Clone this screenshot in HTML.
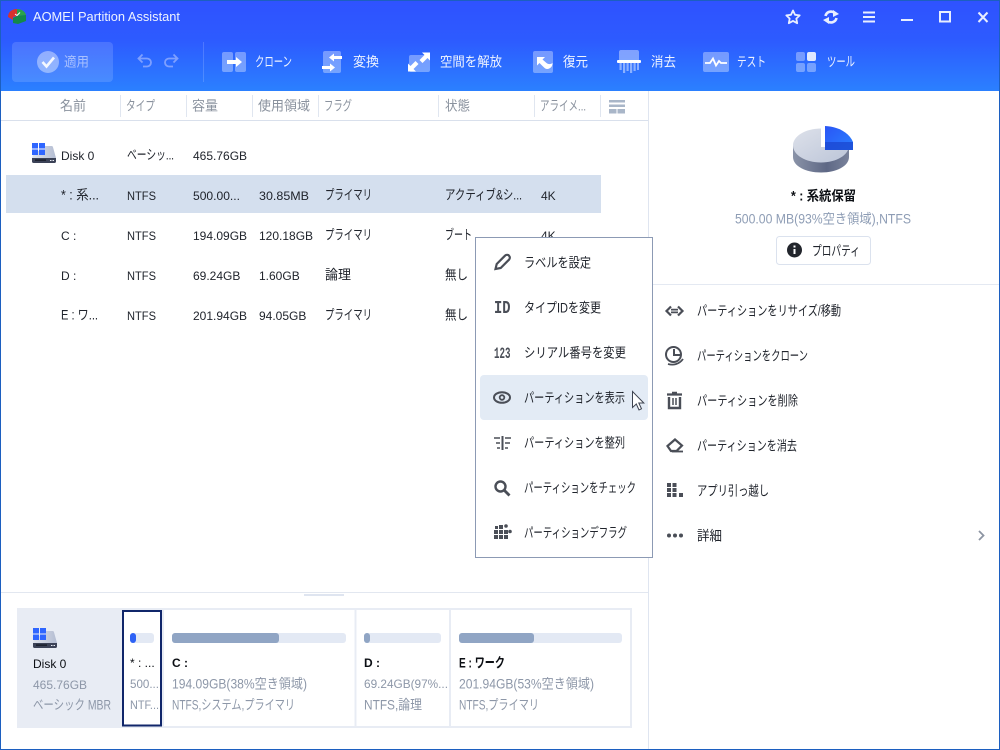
<!DOCTYPE html>
<html lang="ja">
<head>
<meta charset="utf-8">
<title>AOMEI Partition Assistant</title>
<style>
html,body{margin:0;padding:0;width:1000px;height:750px;overflow:hidden;background:#fff}
svg{display:block}
text{font-family:"Liberation Sans","Noto Sans CJK JP",sans-serif;font-size:12px;fill:#20242c;white-space:pre}
text[textLength]{font-size:13.5px;transform:translateY(.6px)}
.h{fill:#8a929e}
.w{fill:#eef3ff}
.g{fill:#8d97a8}
.s{fill:#8e9db5}
.b{font-weight:700;fill:#0c0f14}
.i{fill:#4a4e57}
.ic{fill:#fff;opacity:.35}
text.m{font-family:"Liberation Mono",monospace;font-weight:700;fill:#4a4e57}
</style>
</head>
<body>
<svg width="1000" height="750" viewBox="0 0 1000 750" xmlns="http://www.w3.org/2000/svg">
<defs>
<linearGradient id="hd" x1="0" y1="0" x2="0" y2="1"><stop offset="0" stop-color="#2f52ff"/><stop offset=".45" stop-color="#2d5bff"/><stop offset="1" stop-color="#2b80ff"/></linearGradient>
<linearGradient id="pt" x1="0" y1="0" x2="1" y2="1"><stop offset="0" stop-color="#dde1ea"/><stop offset="1" stop-color="#bcc5d8"/></linearGradient>
<linearGradient id="ps" x1="0" y1="0" x2="1" y2="0"><stop offset="0" stop-color="#8a93a8"/><stop offset=".6" stop-color="#5e6885"/><stop offset="1" stop-color="#79829b"/></linearGradient>
<linearGradient id="pb" x1="0" y1="0" x2="1" y2="1"><stop offset="0" stop-color="#2a55f5"/><stop offset="1" stop-color="#2a80ff"/></linearGradient>
<linearGradient id="dk" x1="0" y1="0" x2="1" y2="0"><stop offset="0" stop-color="#dfe3ec"/><stop offset="1" stop-color="#b4bdd2"/></linearGradient>
<symbol id="disk" viewBox="0 0 24 20" overflow="visible">
<path d="M2 8h11V3h6.500c.8 0 1.300.4 1.500 1.200L24 15H0z" fill="url(#dk)"/>
<path d="M0 15h24v3.500c0 .9-.7 1.500-1.500 1.500h-21C.7 20 0 19.400 0 18.500z" fill="#3b4257"/>
<rect x="3" y="16.500" width="11" height="1.200" fill="#11151f"/>
<rect x="18" y="17" width="1.500" height="1" fill="#e8ecf4"/><rect x="20.500" y="17" width="1.500" height="1" fill="#e8ecf4"/>
<rect x="0" y="0" width="6" height="5.500" fill="#2f66ff"/><rect x="7" y="0" width="6" height="5.500" fill="#2f66ff"/>
<rect x="0" y="6.500" width="6" height="5.500" fill="#2f66ff"/><rect x="7" y="6.500" width="6" height="5.500" fill="#2f66ff"/>
</symbol>
</defs>

<rect width="1000" height="750" fill="#fff"/>
<!-- header -->
<rect x="0" y="0" width="1000" height="91" fill="url(#hd)"/>
<!-- app logo -->
<path d="M8 17c0-5 4-8 9-8v7l-4 1v3z" fill="#d8322e"/>
<path d="M17 9c4 0 8 2 9 6l-9 1z" fill="#2aa34a"/>
<path d="M13 18l4-2 9-1v6l-8 3-5-1z" fill="#14894a"/>
<path d="M15 14l2 1.500 3-3" fill="none" stroke="#fff" stroke-width="1"/>
<text x="33" y="21" class="w" textLength="147" lengthAdjust="spacingAndGlyphs" style="font-size:13px;transform:none">AOMEI Partition Assistant</text>

<!-- window controls -->
<path d="M793 10.500l2 4.300 4.700.6-3.400 3.200.9 4.600-4.200-2.300-4.200 2.300.9-4.600-3.400-3.200 4.700-.6z" fill="none" stroke="#e8eeff" stroke-width="1.800" stroke-linejoin="round"/>
<path d="M825.500 16a5.600 5.600 0 0 1 9-3.200M836.500 18a5.600 5.600 0 0 1-9 3.200" fill="none" stroke="#e8eeff" stroke-width="2.600"/>
<path d="M833 10l6 4-6 3zM829 24l-6-4 6-3z" fill="#e8eeff"/>
<path d="M863 12.500h12M863 17h12M863 21.500h12" stroke="#e8eeff" stroke-width="2"/>
<rect x="901" y="19" width="12" height="2" fill="#e8eeff"/>
<rect x="940" y="12" width="10" height="9.500" fill="none" stroke="#e8eeff" stroke-width="2"/>
<path d="M978.500 12.500l9 9.500M987.500 12.500l-9 9.500" stroke="#e8eeff" stroke-width="2"/>

<!-- toolbar -->
<rect x="12" y="42" width="101" height="40" rx="4" fill="#fff" opacity=".14"/>
<circle cx="48" cy="62" r="11" fill="#fff" opacity=".4"/>
<path d="M42.500 62l4 4.500 7.500-9" fill="none" stroke="#fff" stroke-opacity=".9" stroke-width="2.600"/>
<text x="64" y="66" style="fill:#a8c0ff" textLength="25" lengthAdjust="spacingAndGlyphs">適用</text>
<path d="M139 58.500h8a4 4 0 0 1 0 8h-4M142.500 54.500l-4 4 4 4" fill="none" stroke="#7fa0ff" stroke-width="1.800"/>
<path d="M177 58.500h-8a4 4 0 0 0 0 8h4M173.500 54.500l4 4-4 4" fill="none" stroke="#7fa0ff" stroke-width="1.800"/>
<rect x="203" y="42" width="1" height="40" fill="#fff" opacity=".16"/>

<!-- clone -->
<rect x="222" y="52" width="11" height="20" rx="2" class="ic"/><rect x="235" y="52" width="11" height="20" rx="2" class="ic"/>
<path d="M227 60h9v-3l6 5-6 5v-3h-9z" fill="#fff"/>
<text x="255" y="66" class="w" textLength="37" lengthAdjust="spacingAndGlyphs">クローン</text>
<!-- convert -->
<rect x="323" y="51" width="18" height="22" rx="2" class="ic"/>
<path d="M342 56h-8v-2.500l-5 4 5 4V59h8z" fill="#fff"/>
<path d="M322 66h8v-2.500l5 4-5 4V69h-8z" fill="#fff"/>
<text x="353" y="66" class="w" textLength="26" lengthAdjust="spacingAndGlyphs">変換</text>
<!-- free space -->
<rect x="409" y="55" width="21" height="17" rx="2" class="ic"/>
<path d="M430 52.500v8l-2.500-2.500-5 5-3-3 5-5-2.500-2.500zM408 71.500v-8l2.500 2.500 5-5 3 3-5 5 2.500 2.500z" fill="#fff"/>
<text x="440" y="66" class="w" textLength="62" lengthAdjust="spacingAndGlyphs">空間を解放</text>
<!-- recover -->
<rect x="533" y="51" width="20" height="22" rx="2" class="ic"/>
<path d="M537 57h8l-2.500 2.500 4 3.500c2 1.500 4 1.500 6 0 0 3-1.500 5.500-5 6-2 0-3-1-4.500-2.500l-3.500-3.500-2.500 2.500z" fill="#fff"/>
<text x="563" y="66" class="w" textLength="25" lengthAdjust="spacingAndGlyphs">復元</text>
<!-- wipe -->
<path d="M619 52c0-1 .6-2 2-2h16c1.400 0 2 1 2 2v8h-20z" fill="#fff" opacity=".4"/>
<rect x="617" y="60" width="24" height="3" rx="1" fill="#fff"/>
<path d="M619.500 63h2.200v7h-2.200zM623 63h2.200v10H623zM626.500 63h2.200v8h-2.200zM630 63h2.200v10H630zM633.500 63h2.200v8h-2.200zM637 63h2v7h-2z" fill="#fff" opacity=".45"/>
<text x="651" y="66" class="w" textLength="25" lengthAdjust="spacingAndGlyphs">消去</text>
<!-- test -->
<rect x="703" y="52" width="26" height="20" rx="2" class="ic"/>
<path d="M705 63h5l3-4.500 3 7 3-4.500 2 2h6" fill="none" stroke="#fff" stroke-width="1.800"/>
<text x="737" y="66" class="w" textLength="29" lengthAdjust="spacingAndGlyphs">テスト</text>
<!-- tools -->
<rect x="796" y="52" width="9" height="9" rx="2" class="ic"/><rect x="807" y="52" width="9" height="9" rx="2" fill="#dfe8ff"/>
<rect x="796" y="63" width="9" height="9" rx="2" class="ic"/><rect x="807" y="63" width="9" height="9" rx="2" class="ic"/>
<text x="827" y="66" class="w" textLength="28" lengthAdjust="spacingAndGlyphs">ツール</text>

<!-- table header -->
<rect x="0" y="120" width="648" height="1" fill="#d9e0ec"/>
<g fill="#e0e6f0"><rect x="120" y="95" width="1" height="22"/><rect x="186" y="95" width="1" height="22"/><rect x="252" y="95" width="1" height="22"/><rect x="318" y="95" width="1" height="22"/><rect x="438" y="95" width="1" height="22"/><rect x="534" y="95" width="1" height="22"/><rect x="600" y="95" width="1" height="22"/></g>
<rect x="648" y="91" width="1" height="659" fill="#dfe5f0"/>
<text x="60" y="110" class="h" textLength="26" lengthAdjust="spacingAndGlyphs">名前</text>
<text x="126" y="110" class="h" textLength="29" lengthAdjust="spacingAndGlyphs">タイプ</text>
<text x="192" y="110" class="h" textLength="26" lengthAdjust="spacingAndGlyphs">容量</text>
<text x="258" y="110" class="h" textLength="52" lengthAdjust="spacingAndGlyphs">使用領域</text>
<text x="324" y="110" class="h" textLength="28" lengthAdjust="spacingAndGlyphs">フラグ</text>
<text x="445" y="110" class="h" textLength="25" lengthAdjust="spacingAndGlyphs">状態</text>
<text x="540" y="110" class="h" textLength="46" lengthAdjust="spacingAndGlyphs">アライメ...</text>
<path d="M609 100h16v2.500h-16zM609 104.500h16v2.500h-16z" fill="#a9b6c8"/><rect x="609" y="109" width="7.500" height="4.500" fill="#a9b6c8"/><rect x="617.500" y="109" width="7.500" height="4.500" fill="#a9b6c8"/>

<!-- rows -->
<rect x="6" y="175" width="595" height="38" fill="#d4dfee"/>
<use href="#disk" x="32" y="143" width="24" height="20"/>
<text x="61" y="160">Disk 0</text>
<text x="127" y="159" textLength="47" lengthAdjust="spacingAndGlyphs">ベーシッ...</text>
<text x="193" y="160">465.76GB</text>

<text x="61" y="199" textLength="38" lengthAdjust="spacingAndGlyphs">* : 系...</text>
<text x="127" y="200" textLength="29" lengthAdjust="spacingAndGlyphs" style="font-size:12px;transform:none">NTFS</text>
<text x="193" y="200" textLength="47" lengthAdjust="spacingAndGlyphs" style="font-size:12px;transform:none">500.00...</text>
<text x="259" y="200" textLength="50" lengthAdjust="spacingAndGlyphs" style="font-size:12px;transform:none">30.85MB</text>
<text x="325" y="199" textLength="47" lengthAdjust="spacingAndGlyphs">プライマリ</text>
<text x="445" y="199" textLength="77" lengthAdjust="spacingAndGlyphs">アクティブ&amp;シ...</text>
<text x="541" y="200">4K</text>

<text x="61" y="240">C :</text>
<text x="127" y="240" textLength="29" lengthAdjust="spacingAndGlyphs" style="font-size:12px;transform:none">NTFS</text>
<text x="193" y="240">194.09GB</text>
<text x="259" y="240">120.18GB</text>
<text x="325" y="239" textLength="47" lengthAdjust="spacingAndGlyphs">プライマリ</text>
<text x="445" y="239" textLength="27" lengthAdjust="spacingAndGlyphs">ブート</text>
<text x="541" y="240">4K</text>

<text x="61" y="280">D :</text>
<text x="127" y="280" textLength="29" lengthAdjust="spacingAndGlyphs" style="font-size:12px;transform:none">NTFS</text>
<text x="193" y="280">69.24GB</text>
<text x="259" y="280">1.60GB</text>
<text x="325" y="279" textLength="26" lengthAdjust="spacingAndGlyphs">論理</text>
<text x="445" y="279" textLength="23" lengthAdjust="spacingAndGlyphs">無し</text>

<text x="61" y="319" textLength="37" lengthAdjust="spacingAndGlyphs">E : ワ...</text>
<text x="127" y="320" textLength="29" lengthAdjust="spacingAndGlyphs" style="font-size:12px;transform:none">NTFS</text>
<text x="193" y="320">201.94GB</text>
<text x="259" y="320">94.05GB</text>
<text x="325" y="319" textLength="47" lengthAdjust="spacingAndGlyphs">プライマリ</text>
<text x="445" y="319" textLength="23" lengthAdjust="spacingAndGlyphs">無し</text>

<!-- right panel -->
<path d="M793 146v11c0 9 12.500 15.500 28 15.500s28-6.500 28-15.500v-11z" fill="url(#ps)"/>
<path d="M821 129c-15.500 0-28 7.600-28 17s12.500 17 28 17 28-7.600 28-17c0-.3 0-.6 0-1h-28z" fill="url(#pt)" transform="translate(0 -.5)"/>
<rect x="821" y="126" width="4" height="21" fill="#fff"/>
<path d="M825 126c13 .5 24 6.500 28 16v8h-28z" fill="url(#pb)"/>
<path d="M825 142h28v8h-28z" fill="#1b46cf" opacity=".75"/>
<text x="791" y="200" class="b" textLength="65" lengthAdjust="spacingAndGlyphs">* : 系統保留</text>
<text x="735" y="223" class="s" textLength="176" lengthAdjust="spacingAndGlyphs">500.00 MB(93%空き領域),NTFS</text>
<rect x="776.500" y="236.500" width="94" height="28" rx="3" fill="#fff" stroke="#dbe2ee"/>
<circle cx="794.500" cy="250" r="7.500" fill="#22252c"/>
<rect x="793.500" y="249" width="2" height="5" fill="#fff"/><rect x="793.500" y="245.500" width="2" height="2" fill="#fff"/>
<text x="812" y="255" textLength="48" lengthAdjust="spacingAndGlyphs">プロパティ</text>
<rect x="649" y="284" width="351" height="1" fill="#e4e9f2"/>

<!-- right actions -->
<path d="M671 309.600h7M671 312.400h7" stroke="#4a4e57" stroke-width="1.800" fill="none"/>
<path d="M671 306.500l-4.500 4.500 4.500 4.500M678 306.500l4.500 4.500-4.500 4.500" fill="none" stroke="#4a4e57" stroke-width="2.200"/>
<text x="697" y="315" textLength="144" lengthAdjust="spacingAndGlyphs">パーティションをリサイズ/移動</text>
<circle cx="673.500" cy="354.500" r="7.500" fill="none" stroke="#4a4e57" stroke-width="2"/>
<path d="M674 349v6h6" fill="none" stroke="#4a4e57" stroke-width="2"/>
<path d="M668 364c5 1.500 11 .5 15-5" fill="none" stroke="#4a4e57" stroke-width="1.800"/>
<text x="697" y="360" textLength="111" lengthAdjust="spacingAndGlyphs">パーティションをクローン</text>
<path d="M667 394.500h15M672 392.800h5" stroke="#4a4e57" stroke-width="2.200" fill="none"/>
<path d="M669 397v11h11v-11" fill="none" stroke="#4a4e57" stroke-width="2.400"/>
<path d="M673 398v7M676 398v7" stroke="#4a4e57" stroke-width="1.500"/>
<text x="697" y="405" textLength="101" lengthAdjust="spacingAndGlyphs">パーティションを削除</text>
<path d="M667.500 446l7.500-6.500 7 6-5.500 5.500h-5.500z" fill="none" stroke="#4a4e57" stroke-width="2.200"/>
<path d="M672 451.500h11" stroke="#4a4e57" stroke-width="1.800"/>
<text x="697" y="450" textLength="100" lengthAdjust="spacingAndGlyphs">パーティションを消去</text>
<g class="i"><rect x="667" y="483" width="4" height="4"/><rect x="672.500" y="483" width="4" height="4"/><rect x="667" y="488" width="4" height="4"/><rect x="672.500" y="488" width="4" height="4"/><rect x="667" y="493" width="4" height="4"/><rect x="672.500" y="493" width="4" height="4"/><rect x="679" y="493" width="4" height="4"/></g>
<text x="697" y="495" textLength="72" lengthAdjust="spacingAndGlyphs">アプリ引っ越し</text>
<circle cx="669" cy="535.500" r="2" class="i"/><circle cx="675" cy="535.500" r="2" class="i"/><circle cx="681" cy="535.500" r="2" class="i"/>
<text x="697" y="540" textLength="25" lengthAdjust="spacingAndGlyphs">詳細</text>
<path d="M979 531l4.500 4.500-4.500 4.500" fill="none" stroke="#8d95a3" stroke-width="1.800"/>

<!-- context menu -->
<rect x="475.500" y="237.500" width="177" height="320" fill="#fff" stroke="#8c9ab4"/>
<rect x="480" y="375" width="168" height="45" rx="4" fill="#e3ebf5"/>
<path d="M495.500 269l1.200-5 8.300-8.300c1.200-1.200 3-1.200 4 0s1.200 2.800 0 4l-8.300 8.300z" fill="none" stroke="#4a4e57" stroke-width="2.200"/>
<text x="524" y="267" textLength="67" lengthAdjust="spacingAndGlyphs">ラベルを設定</text>
<text x="494" y="313" class="m" style="font-size:18px;transform:none" textLength="16.500" lengthAdjust="spacingAndGlyphs">ID</text>
<text x="524" y="312" textLength="77" lengthAdjust="spacingAndGlyphs">タイプIDを変更</text>
<text x="494" y="358" class="m" style="font-size:16px;transform:none" textLength="16.500" lengthAdjust="spacingAndGlyphs">123</text>
<text x="524" y="357" textLength="102" lengthAdjust="spacingAndGlyphs">シリアル番号を変更</text>
<ellipse cx="502" cy="397.500" rx="8" ry="5.300" fill="none" stroke="#4a4e57" stroke-width="2"/>
<circle cx="502" cy="397.500" r="2.300" fill="none" stroke="#4a4e57" stroke-width="1.800"/>
<text x="524" y="402" textLength="101" lengthAdjust="spacingAndGlyphs">パーティションを表示</text>
<path d="M494 438h6M496 443h4M497 448h3M505 438h6M505 443h5M505 448h3" stroke="#4a4e57" stroke-width="1.600"/>
<path d="M502.500 436v14" stroke="#4a4e57" stroke-width="2"/>
<text x="524" y="447" textLength="101" lengthAdjust="spacingAndGlyphs">パーティションを整列</text>
<circle cx="500.500" cy="486.500" r="5" fill="none" stroke="#4a4e57" stroke-width="2.400"/>
<path d="M504 490l5.500 5.500" stroke="#4a4e57" stroke-width="2.800"/>
<text x="524" y="492" textLength="112" lengthAdjust="spacingAndGlyphs">パーティションをチェック</text>
<g class="i"><rect x="494" y="530" width="4" height="4"/><rect x="499" y="530" width="4" height="4"/><rect x="504" y="530" width="4" height="4"/><rect x="494" y="535" width="4" height="4"/><rect x="499" y="535" width="4" height="4"/><rect x="504" y="535" width="4" height="4"/><rect x="495" y="526" width="3" height="3"/><rect x="499" y="525" width="4" height="4"/><circle cx="506" cy="526" r="1.800"/><circle cx="510" cy="531.500" r="1.800"/></g>
<text x="524" y="537" textLength="103" lengthAdjust="spacingAndGlyphs">パーティションデフラグ</text>
<path d="M632.500 391.500v16l3.800-3.500 2.700 6 2.500-1.200-2.700-5.800h5z" fill="#fff" stroke="#3d4350" stroke-width="1"/>

<!-- bottom panel -->
<rect x="0" y="592" width="648" height="1" fill="#e2e7f0"/>
<rect x="304" y="594" width="40" height="2" fill="#dfe5f0"/>
<rect x="18" y="609" width="613" height="118" fill="#fff" stroke="#e8ecf4" stroke-width="2"/>
<rect x="17" y="608" width="105" height="120" fill="#e8ecf4"/>
<rect x="162" y="608" width="2" height="120" fill="#e8ecf4"/>
<rect x="354.500" y="608" width="2" height="120" fill="#e8ecf4"/>
<rect x="449" y="608" width="2" height="120" fill="#e8ecf4"/>
<rect x="123" y="611" width="38" height="114.500" fill="#fff" stroke="#10266a" stroke-width="2"/>
<use href="#disk" x="33" y="628" width="24" height="20"/>
<text x="33" y="668" class="b" style="font-weight:400;-webkit-text-stroke:.3px #0c0f14">Disk 0</text>
<text x="33" y="689" class="g">465.76GB</text>
<text x="33" y="709" class="g" textLength="78" lengthAdjust="spacingAndGlyphs">ベーシック MBR</text>

<rect x="130" y="633" width="24" height="10" rx="3" fill="#e3e9f4"/><rect x="130" y="633" width="6" height="10" rx="3" fill="#2d62f5"/>
<rect x="172" y="633" width="174" height="10" rx="3" fill="#e3e9f4"/><rect x="172" y="633" width="107" height="10" rx="3" fill="#90a5c4"/>
<rect x="364" y="633" width="77" height="10" rx="3" fill="#e3e9f4"/><rect x="364" y="633" width="6" height="10" rx="3" fill="#90a5c4"/>
<rect x="459" y="633" width="163" height="10" rx="3" fill="#e3e9f4"/><rect x="459" y="633" width="75" height="10" rx="3" fill="#90a5c4"/>

<text x="130" y="667" class="b" style="font-weight:400">* : ...</text>
<text x="130" y="688" class="g" textLength="29" lengthAdjust="spacingAndGlyphs" style="font-size:12px;transform:none">500...</text>
<text x="130" y="709" class="g" textLength="29" lengthAdjust="spacingAndGlyphs" style="font-size:12px;transform:none">NTF...</text>

<text x="172" y="667" class="b">C :</text>
<text x="172" y="688" class="g" textLength="135" lengthAdjust="spacingAndGlyphs">194.09GB(38%空き領域)</text>
<text x="172" y="709" class="g" textLength="123" lengthAdjust="spacingAndGlyphs">NTFS,システム,プライマリ</text>

<text x="364" y="667" class="b">D :</text>
<text x="364" y="688" class="g" textLength="84" lengthAdjust="spacingAndGlyphs" style="font-size:12px;transform:none">69.24GB(97%...</text>
<text x="364" y="709" class="g" textLength="58" lengthAdjust="spacingAndGlyphs">NTFS,論理</text>

<text x="459" y="667" class="b" textLength="46" lengthAdjust="spacingAndGlyphs">E : ワーク</text>
<text x="459" y="688" class="g" textLength="135" lengthAdjust="spacingAndGlyphs">201.94GB(53%空き領域)</text>
<text x="459" y="709" class="g" textLength="80" lengthAdjust="spacingAndGlyphs">NTFS,プライマリ</text>

<!-- window border -->
<rect x=".5" y=".5" width="999" height="749" fill="none" stroke="#1c5fc0"/>
</svg>
</body>
</html>
